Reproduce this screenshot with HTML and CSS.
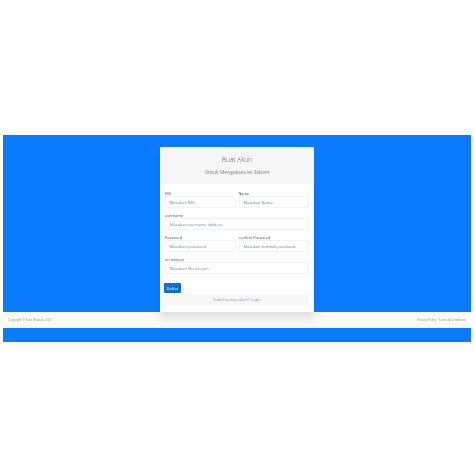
FILE: index.html
```html
<!DOCTYPE html>
<html lang="id">
<head>
    <meta charset="UTF-8">
    <meta name="viewport" content="width=device-width, initial-scale=1.0">
    <title>Buat Akun</title>
    <link rel="stylesheet" href="styles.css">
</head>
<body>

    <div class="halaman">
        <!-- Area biru dengan kartu -->
        <main class="konten">
            <div class="kartu">
                <div class="kartu-header">
                    <h1>Buat Akun</h1>
                    <p>Untuk Mengakses ke Sistem</p>
                </div>
                <form class="kartu-body">
                    <div class="baris">
                        <div class="grup">
                            <label>NIK</label>
                            <input type="text" placeholder="Masukan NIK">
                        </div>
                        <div class="grup">
                            <label>Nama</label>
                            <input type="text" placeholder="Masukan Nama">
                        </div>
                    </div>
                    <div class="grup">
                        <label>username</label>
                        <input type="text" placeholder="Masukan username address">
                    </div>
                    <div class="baris">
                        <div class="grup">
                            <label>Password</label>
                            <input type="password" placeholder="Masukan password">
                        </div>
                        <div class="grup">
                            <label>confirm Password</label>
                            <input type="password" placeholder="Masukan kembali password">
                        </div>
                    </div>
                    <div class="grup">
                        <label>no telepon</label>
                        <input type="text" placeholder="Masukan No telepon">
                    </div>
                    <button type="button" class="tombol">Daftar</button>
                </form>
                <div class="kartu-footer">Sudah punya akun? Login</div>
            </div>
        </main>

        <!-- Rodapé -->
        <footer class="rodape">
            <span>Copyright &copy; Your Website 2021</span>
            <span>Privacy Policy &middot; Terms &amp; Conditions</span>
        </footer>
        <div class="pita"></div>
    </div>

</body>
</html>
```

FILE: styles.css
```css
/* Estilos gerais */
body {
    margin: 0;
    background-color: #fff;
    font-family: 'Open Sans', sans-serif;
    color: #6c757d;
}

.halaman {
    margin: 135px 3px 0;
    filter: blur(0.6px);
}

/* Area biru */
.konten {
    background-color: #0a7bfd;
    padding-top: 12px;
}

.kartu {
    position: relative;
    z-index: 1;
    width: 154px;
    height: 165px;
    margin: 0 auto;
    background-color: #fff;
    box-shadow: 0 6px 9px rgba(0, 0, 0, 0.12);
    display: flex;
    flex-direction: column;
}

.kartu-header {
    height: 37px;
    background-color: #f6f6f6;
    text-align: center;
    flex-shrink: 0;
}

.kartu-header h1 {
    margin: 0;
    padding-top: 8px;
    font-size: 6.5px;
    line-height: 9px;
    font-weight: 300;
    color: #4f545a;
}

.kartu-header p {
    margin: 5px 0 0;
    font-size: 5px;
    line-height: 7px;
    color: #7b8087;
}

/* Formulário */
.kartu-body {
    padding: 7px 5px 0;
    display: flex;
    flex-direction: column;
    gap: 5px;
}

.baris {
    display: flex;
    gap: 3px;
}

.grup {
    flex: 1;
    display: flex;
    flex-direction: column;
}

.grup label {
    font-size: 3.8px;
    line-height: 5px;
    color: #4a4f55;
}

.grup input {
    box-sizing: border-box;
    width: 100%;
    height: 12px;
    margin: 0;
    padding: 0 4px;
    border: 1px solid #f1f2f4;
    border-radius: 1px;
    outline: none;
    font-family: inherit;
    font-size: 4px;
}

.grup input::placeholder {
    color: #7b8087;
}

.tombol {
    align-self: flex-start;
    width: 17px;
    height: 10px;
    margin: 4px 0 0 -1px;
    padding: 0;
    border: none;
    border-radius: 1px;
    background-color: #0d6fd0;
    color: #fff;
    font-family: inherit;
    font-size: 4px;
}

.kartu-footer {
    height: 11px;
    margin: 1px 5px 0;
    background-color: #f7f7f7;
    text-align: center;
    font-size: 4px;
    line-height: 11px;
    color: #7d9bc4;
}

/* Rodapé */
.rodape {
    height: 16px;
    padding: 0 5px;
    background-color: #fbfbfb;
    display: flex;
    justify-content: space-between;
    align-items: center;
    font-size: 3px;
    color: #8b9097;
}

.pita {
    height: 14px;
    background-color: #0a7bfd;
}
```
